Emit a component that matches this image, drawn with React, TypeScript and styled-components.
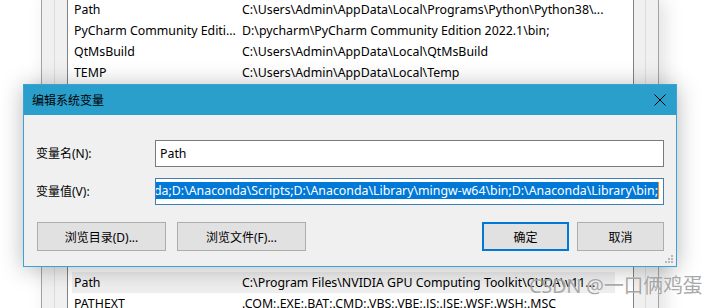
import React from "react";
import styled, { createGlobalStyle } from "styled-components";

const GlobalStyle = createGlobalStyle`
  html, body { margin: 0; padding: 0; background: #ffffff; overflow: hidden; }
  * { box-sizing: border-box; }
`;

const FONT = `"Noto Sans", "Noto Sans CJK SC", sans-serif`;

const Screen = styled.div`
  position: relative;
  width: 715px;
  height: 308px;
  overflow: hidden;
  background: #ffffff;
  font-family: ${FONT};
  font-size: 12px;
  color: #000;
`;

const EnvWindow = styled.div`
  display: flex;
  flex-direction: column;
  margin-left: 41px;
  width: 618px;
  height: 340px;
  background: #f0f0f0;
  border-left: 1px solid #a3a3a3;
  border-right: 1px solid #a3a3a3;
  box-shadow: 6px 0 18px rgba(0, 0, 0, 0.12);
  padding: 0 12px 0 12px;
`;

const Group = styled.div`
  display: flex;
  flex-direction: column;
  flex: 1;
  border-left: 1px solid #dcdcdc;
  border-right: 1px solid #dcdcdc;
  padding: 0 11px 0 12px;
`;

const ListBox = styled.div<{ $h: number; $mt: number; $pt?: number }>`
  display: flex;
  flex-direction: column;
  height: ${(p) => p.$h}px;
  margin-top: ${(p) => p.$mt}px;
  padding-top: ${(p) => p.$pt ?? 0}px;
  background: #ffffff;
  border: 1px solid #828282;
  padding-left: 4px;
`;

const Row = styled.div<{ $selected?: boolean }>`
  display: flex;
  align-items: center;
  height: 21px;
  flex-shrink: 0;
  width: 543px;
  background: ${(p) => (p.$selected ? "#efefef" : "transparent")};
  white-space: nowrap;
  font-size: 12.35px;
`;

const NameCell = styled.div`
  width: 170px;
  padding-left: 2px;
  overflow: hidden;
`;

const ValueCell = styled.div`
  flex: 1;
  overflow: hidden;
`;

const Dialog = styled.div`
  position: absolute;
  left: 23px;
  top: 84px;
  width: 654px;
  height: 183px;
  display: flex;
  flex-direction: column;
  background: #f0f0f0;
  border: 1px solid #3aa3d3;
  box-shadow: 0 2px 22px rgba(0, 0, 0, 0.28);
`;

const TitleBar = styled.div`
  display: flex;
  align-items: center;
  justify-content: space-between;
  height: 30px;
  flex-shrink: 0;
  background: #2b9fcc;
  padding: 0 10px 0 8px;
  color: #000;
  font-size: 12px;
`;

const CloseButton = styled.div`
  display: flex;
  align-items: center;
  justify-content: center;
  width: 12px;
  height: 12px;
`;

const Body = styled.div`
  display: flex;
  flex-direction: column;
  padding: 25px 12px 0 12px;
`;

const Field = styled.div<{ $mt?: number }>`
  display: flex;
  align-items: center;
  margin-top: ${(p) => p.$mt ?? 0}px;
`;

const Label = styled.div`
  width: 119px;
  flex-shrink: 0;
  margin-top: -2px;
`;

const TextBox = styled.div<{ $focused?: boolean }>`
  flex: 1;
  height: 27px;
  display: flex;
  align-items: center;
  justify-content: ${(p) => (p.$focused ? "flex-end" : "flex-start")};
  overflow: hidden;
  background: #ffffff;
  border: 1px solid ${(p) => (p.$focused ? "#3f7fb5" : "#7a7a7a")};
  padding: 0 4px;
  font-size: 12.35px;
`;

const Selected = styled.span`
  flex-shrink: 0;
  white-space: nowrap;
  background: #0078d7;
  color: #ffffff;
  line-height: 17px;
  margin-top: -3px;
`;

const Caret = styled.span`
  flex-shrink: 0;
  width: 1px;
  height: 17px;
  margin-top: -3px;
  background: #ff8a00;
`;

const ButtonRow = styled.div`
  display: flex;
  align-items: center;
  margin-top: 17px;
  padding-left: 1px;
`;

const ButtonGroup = styled.div<{ $gap: number }>`
  display: flex;
  gap: ${(p) => p.$gap}px;
`;

const Spacer = styled.div`
  flex: 1;
`;

const Button = styled.div<{ $w: number; $default?: boolean }>`
  width: ${(p) => p.$w}px;
  height: 29px;
  display: flex;
  align-items: center;
  justify-content: center;
  background: #e1e1e1;
  border: ${(p) => (p.$default ? "2px solid #0078d7" : "1px solid #adadad")};
  font-size: 12px;
`;

const Grip = styled.svg`
  position: absolute;
  right: 3px;
  bottom: 3px;
`;

const Watermark = styled.div`
  position: absolute;
  left: 529px;
  top: 272px;
  font-family: "Noto Sans", "Noto Sans CJK SC", sans-serif;
  font-size: 20px;
  line-height: 28px;
  letter-spacing: -0.3px;
  color: rgba(125, 125, 125, 0.68);
  white-space: nowrap;
  text-shadow: 0 0 1px rgba(255, 255, 255, 0.8);
`;

const topRows = [
  ["Path", "C:\\Users\\Admin\\AppData\\Local\\Programs\\Python\\Python38\\..."],
  ["PyCharm Community Editi...", "D:\\pycharm\\PyCharm Community Edition 2022.1\\bin;"],
  ["QtMsBuild", "C:\\Users\\Admin\\AppData\\Local\\QtMsBuild"],
  ["TEMP", "C:\\Users\\Admin\\AppData\\Local\\Temp"],
];

const bottomRows = [
  ["Path", "C:\\Program Files\\NVIDIA GPU Computing Toolkit\\CUDA\\v11...", true],
  ["PATHEXT", ".COM;.EXE;.BAT;.CMD;.VBS;.VBE;.JS;.JSE;.WSF;.WSH;.MSC", false],
] as const;

const valueText =
  "D:\\Anaconda;D:\\Anaconda\\Scripts;D:\\Anaconda\\Library\\mingw-w64\\bin;D:\\Anaconda\\Library\\bin;";

export default function App() {
  return (
    <>
      <GlobalStyle />
      <Screen>
        <EnvWindow>
          <Group>
            <ListBox $h={140} $mt={-2}>
              {topRows.map(([n, v]) => (
                <Row key={n}>
                  <NameCell>{n}</NameCell>
                  <ValueCell>{v}</ValueCell>
                </Row>
              ))}
            </ListBox>
            <ListBox $h={120} $mt={87} $pt={46}>
              {bottomRows.map(([n, v, s]) => (
                <Row key={n} $selected={s}>
                  <NameCell>{n}</NameCell>
                  <ValueCell>{v}</ValueCell>
                </Row>
              ))}
            </ListBox>
          </Group>
        </EnvWindow>

        <Dialog>
          <TitleBar>
            <span>编辑系统变量</span>
            <CloseButton>
              <svg width="12" height="12" viewBox="0 0 12 12">
                <path d="M0.5 0.5 L11.5 11.5 M11.5 0.5 L0.5 11.5" stroke="#000" strokeWidth="1" fill="none" />
              </svg>
            </CloseButton>
          </TitleBar>
          <Body>
            <Field>
              <Label>变量名(N):</Label>
              <TextBox>Path</TextBox>
            </Field>
            <Field $mt={11}>
              <Label>变量值(V):</Label>
              <TextBox $focused>
                <Selected>{valueText}</Selected>
                <Caret />
              </TextBox>
            </Field>
            <ButtonRow>
              <ButtonGroup $gap={11}>
                <Button $w={129}>浏览目录(D)...</Button>
                <Button $w={129}>浏览文件(F)...</Button>
              </ButtonGroup>
              <Spacer />
              <ButtonGroup $gap={8}>
                <Button $w={87} $default>确定</Button>
                <Button $w={87}>取消</Button>
              </ButtonGroup>
            </ButtonRow>
          </Body>
          <Grip width="10" height="10" viewBox="0 0 10 10">
            {[
              [8, 0], [8, 3], [5, 3], [8, 6], [5, 6], [2, 6],
            ].map(([x, y]) => (
              <rect key={`${x}-${y}`} x={x} y={y + 2} width="2" height="2" fill="#b8b8b8" />
            ))}
          </Grip>
        </Dialog>

        <Watermark>CSDN @一口俩鸡蛋</Watermark>
      </Screen>
    </>
  );
}
